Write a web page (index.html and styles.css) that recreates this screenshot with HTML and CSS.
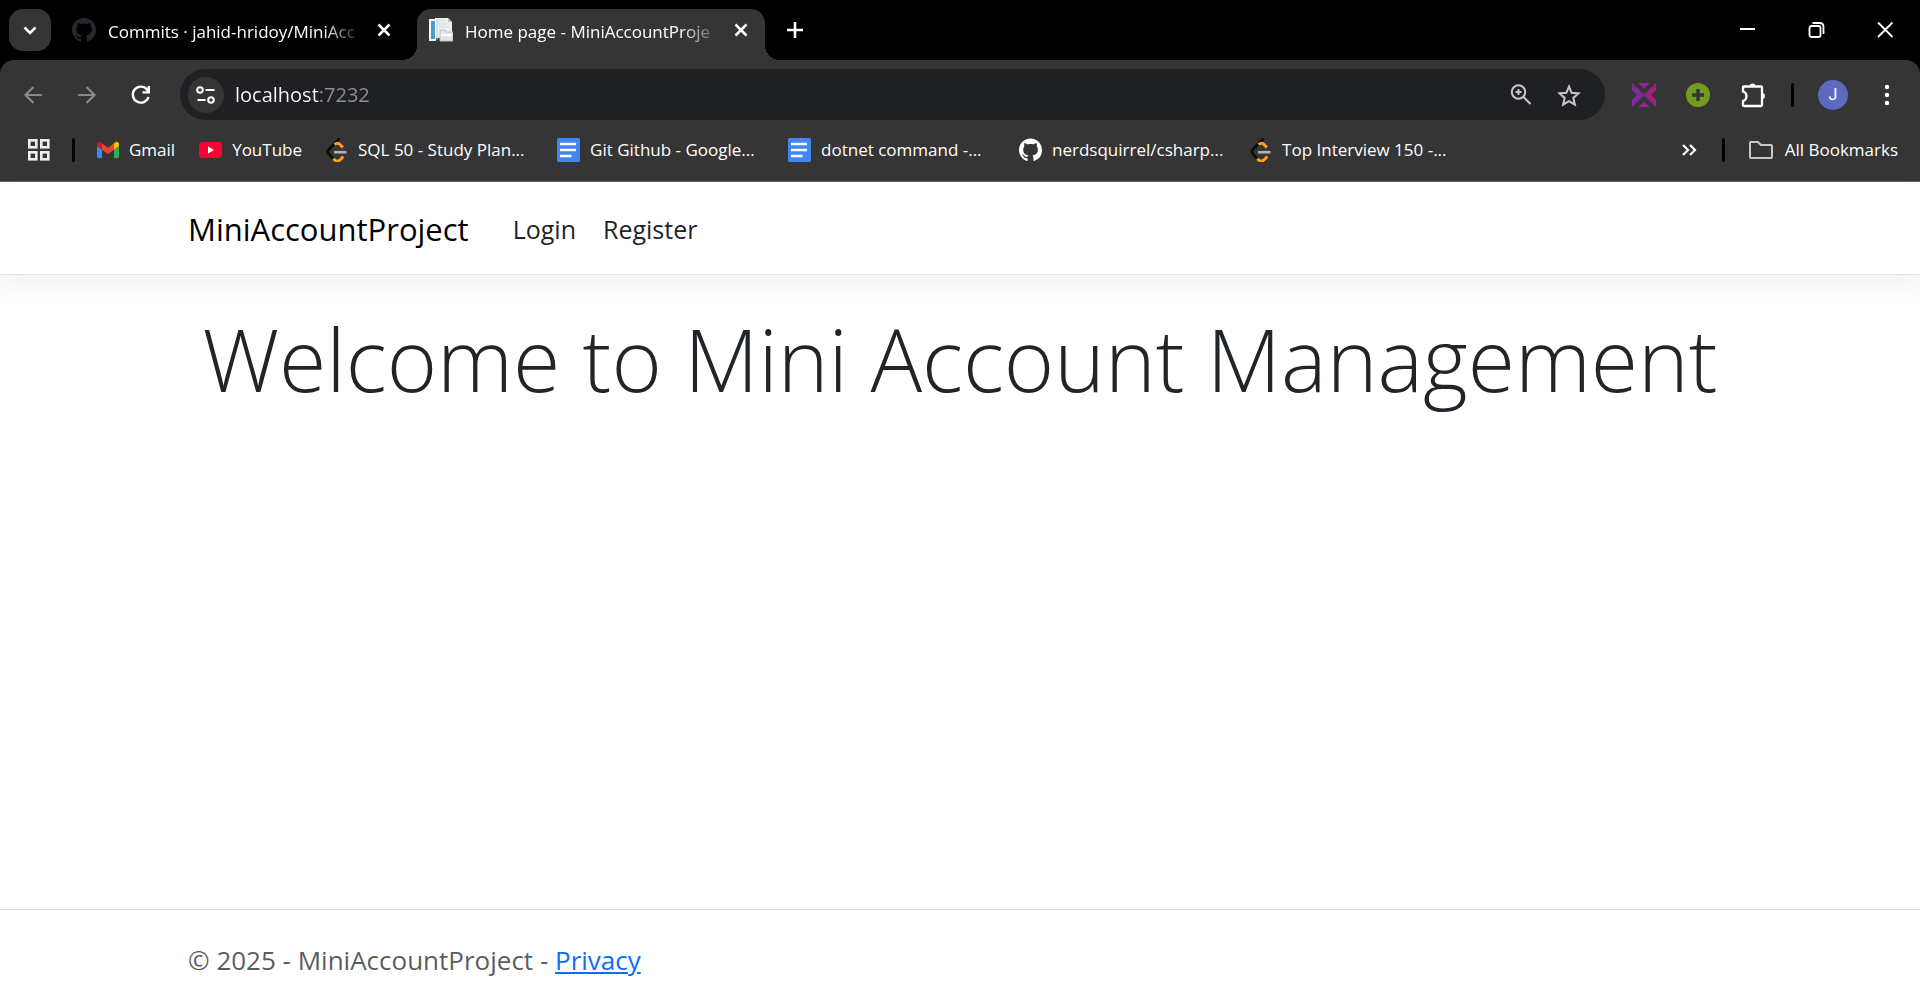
FILE: index.html
```html
<!DOCTYPE html>
<html lang="en">
<head>
<meta charset="utf-8">
<meta name="viewport" content="width=device-width, initial-scale=1">
<title>Home page - MiniAccountProject</title>
<link rel="stylesheet" href="styles.css">
</head>
<body>
<svg class="defs" aria-hidden="true">
  <symbol id="github" viewBox="0 0 16 16"><path d="M8 0C3.58 0 0 3.58 0 8c0 3.54 2.29 6.53 5.47 7.59.4.07.55-.17.55-.38 0-.19-.01-.82-.01-1.49-2.01.37-2.53-.49-2.69-.94-.09-.23-.48-.94-.82-1.13-.28-.15-.68-.52-.01-.53.63-.01 1.08.58 1.23.82.72 1.21 1.87.87 2.33.66.07-.52.28-.87.51-1.07-1.78-.2-3.64-.89-3.64-3.95 0-.87.31-1.59.82-2.15-.08-.2-.36-1.02.08-2.12 0 0 .67-.21 2.2.82.64-.18 1.32-.27 2-.27s1.36.09 2 .27c1.53-1.04 2.2-.82 2.2-.82.44 1.1.16 1.92.08 2.12.51.56.82 1.27.82 2.15 0 3.07-1.87 3.75-3.65 3.95.29.25.54.73.54 1.48 0 1.07-.01 1.93-.01 2.2 0 .21.15.46.55.38A8.01 8.01 0 0 0 16 8c0-4.42-3.58-8-8-8z" fill="currentColor"/></symbol>
  <symbol id="close" viewBox="0 0 24 24"><path d="M6.500 6.500 17.500 17.500M17.500 6.500 6.500 17.500" stroke="#fff" stroke-width="2.500"/></symbol>
  <symbol id="docs" viewBox="0 0 23 24"><rect width="23" height="24" rx="1.500" fill="#4285f4"/><path d="M3 6H19M3 12H19M3 18H14.500" stroke="#fff" stroke-width="2.500"/></symbol>
  <symbol id="leetcode" viewBox="0 0 22 24"><path d="M13.500 .5 2.700 11.500Q.8 13.500 2.700 15.600L7.500 21" fill="none" stroke="#0b0b0b" stroke-width="2.800"/><path d="M8.500 6.500Q11.500 4 14 6.500L16.800 9.500M7.300 20.800Q11 25 14.500 21.500L17.300 18.500" fill="none" stroke="#ffa116" stroke-width="2.900"/><path d="M8 14.200H20.500" stroke="#b3b3b3" stroke-width="2.600"/></symbol>
</svg>

<header class="browser">
  <div class="tabstrip">
    <button class="tab-search" aria-label="Search tabs"><svg width="24" height="24" viewBox="0 0 24 24"><path d="m6.500 9.500 5.500 5.500 5.500-5.500" fill="none" stroke="#fff" stroke-width="2.600"/></svg></button>
    <div class="tab">
      <svg class="tab-icon tab-github"><use href="#github"/></svg>
      <span class="tab-title">Commits · jahid-hridoy/MiniAcc</span>
      <button class="icon-button" aria-label="Close tab"><svg width="24" height="24"><use href="#close"/></svg></button>
    </div>
    <div class="tab tab-active">
      <svg class="tab-icon" viewBox="0 0 24 24"><path d="M6 0H19L23 4V20H6Z" fill="#eef1f4"/><path d="M0 1H7V23H0Z" fill="#f4f7f9"/><path d="M2 3H6V21H2Z" fill="#4a9cc9"/><path d="M9 3H17M9 6H20M9 9H20" stroke="#d5dbe1"/><path d="M19 0V4H23Z" fill="#b9c1c8"/><path d="M8 1V22" stroke="#c3ccd4"/><path d="M11 12H16L17 14H24V23H11Z" fill="#dfe5ea" stroke="#b5c0ca"/><path d="M12 17H23" stroke="#fff" stroke-width="2"/></svg>
      <span class="tab-title">Home page - MiniAccountProje</span>
      <button class="icon-button" aria-label="Close tab"><svg width="24" height="24"><use href="#close"/></svg></button>
    </div>
    <button class="icon-button new-tab" aria-label="New tab"><svg width="24" height="24" viewBox="0 0 24 24"><path d="M12 4V20M4 12H20" stroke="#fff" stroke-width="2.500"/></svg></button>
    <div class="window-controls">
      <button class="icon-button" aria-label="Minimize"><svg width="24" height="24" viewBox="0 0 24 24"><path d="M5 11H20" stroke="#fff" stroke-width="2"/></svg></button>
      <button class="icon-button" aria-label="Restore"><svg width="24" height="24" viewBox="0 0 24 24"><g fill="none" stroke="#fff" stroke-width="1.800"><rect x="5.500" y="8" width="11" height="11" rx="2"/><path d="M8.500 5H15.500Q19.500 5 19.500 9V16"/></g></svg></button>
      <button class="icon-button" aria-label="Close window"><svg width="24" height="24" viewBox="0 0 24 24"><path d="m5 4.500 14.500 14.500M19.500 4.500 5 19" stroke="#fff" stroke-width="1.800"/></svg></button>
    </div>
  </div>

  <div class="toolbar">
    <div class="nav-buttons">
      <button class="icon-button muted" aria-label="Back"><svg width="24" height="24" viewBox="0 0 24 24"><path d="M21 12H5M12.500 4 4.500 12l8 8" fill="none" stroke="currentColor" stroke-width="2.200"/></svg></button>
      <button class="icon-button muted" aria-label="Forward"><svg width="24" height="24" viewBox="0 0 24 24"><path d="M3 12H19M11.500 4l8 8-8 8" fill="none" stroke="currentColor" stroke-width="2.200"/></svg></button>
      <button class="icon-button" aria-label="Reload"><svg width="24" height="24" viewBox="0 0 24 24"><path d="M19.500 14A8 8 0 1 1 18 6.500L20 9" fill="none" stroke="#fff" stroke-width="2.400"/><path d="M21 3V10.500H13.500V8.200H18.600V3Z" fill="#fff"/></svg></button>
    </div>
    <div class="omnibox">
      <button class="site-info" aria-label="View site information"><svg width="24" height="24" viewBox="0 0 24 24"><g fill="none" stroke="#fff" stroke-width="2"><circle cx="6" cy="7" r="2.800"/><path d="M11.500 7H20.500M3.500 17H11.500"/><circle cx="17" cy="17" r="2.800"/></g></svg></button>
      <input class="address" type="text" aria-label="Address" value="localhost:7232">
      <button class="icon-button" aria-label="Zoom"><svg width="24" height="24" viewBox="0 0 24 24"><g fill="none" stroke="#c7c7c7" stroke-width="2"><circle cx="9.500" cy="9" r="6.700"/><path d="m14.500 14 7 7"/><path d="M9.500 6V12M6.500 9H12.500"/></g></svg></button>
      <button class="icon-button" aria-label="Bookmark this tab"><svg width="26" height="26" viewBox="0 0 26 26"><path d="m12 3.500 2.600 6.300 6.900.6-5.200 4.500 1.600 6.800-5.900-3.600-5.900 3.600 1.600-6.800L2.500 10.400l6.900-.6Z" fill="none" stroke="#c7c7c7" stroke-width="2"/></svg></button>
    </div>
    <div class="extensions">
      <button class="icon-button" aria-label="Extension"><svg width="24" height="24" viewBox="0 0 24 24"><path d="M0 0 11 12 0 24V17L5 12 0 7Z" fill="#72309b"/><path d="M24 0 13 12 24 24V17L19 12 24 7Z" fill="#b41b76"/><path d="M0 0V5L5 10 7 12 5 14 0 19V24L12 13.500 24 24V19L17 12 24 5V0L12 10.500Z" fill="#8b2793" opacity=".6"/><path d="M6 0H18L12 5.500ZM6 24H18L12 18.500Z" fill="#93278f"/></svg></button>
      <button class="icon-button" aria-label="Add"><svg width="24" height="24" viewBox="0 0 24 24"><circle cx="12" cy="12" r="12" fill="#739c1f"/><path d="M12 6V18M6 12H18" stroke="#353535" stroke-width="3.500"/></svg></button>
      <button class="icon-button" aria-label="Extensions"><svg width="26" height="26" viewBox="0 0 26 26"><path d="M4 3.500H21Q22 3.500 22 4.500V22Q22 23 21 23H4Q3 23 3 22V18Q6.500 17 6.500 13.200T3 8.500V4.500Q3 3.500 4 3.500" fill="none" stroke="#fff" stroke-width="2.300"/><path d="M9.500 3.500a3 3 0 0 1 6 0ZM22 10a3 3 0 0 1 0 6Z" fill="#fff"/></svg></button>
      <span class="divider"></span>
      <button class="avatar" aria-label="Profile">J</button>
      <button class="icon-button" aria-label="Menu"><svg width="24" height="24" viewBox="0 0 24 24"><g fill="#fff"><circle cx="12" cy="4" r="2.200"/><circle cx="12" cy="12" r="2.200"/><circle cx="12" cy="20" r="2.200"/></g></svg></button>
    </div>
  </div>

  <nav class="bookmarks" aria-label="Bookmarks">
    <button class="icon-button" aria-label="Apps"><svg width="24" height="24" viewBox="0 0 24 24"><g fill="none" stroke="#eee" stroke-width="2.600"><rect x="2.300" y="2.300" width="7" height="7"/><rect x="14.300" y="2.300" width="7" height="7"/><rect x="2.300" y="14.300" width="7" height="7"/><rect x="14.300" y="14.300" width="7" height="7"/></g></svg></button>
    <span class="divider"></span>
    <div class="bookmark-list">
      <a class="bookmark" href="#"><svg width="22" height="24" viewBox="52 38 88 74"><path fill="#4285f4" d="M58 108h14V74L52 59v43c0 3.320 2.690 6 6 6"/><path fill="#34a853" d="M120 108h14c3.320 0 6-2.690 6-6V59l-20 15"/><path fill="#fbbc04" d="M120 48v26l20-15v-8c0-7.420-8.470-11.650-14.400-7.200"/><path fill="#ea4335" d="M72 74V48l24 18 24-18v26L96 92"/><path fill="#c5221f" d="M52 51v8l20 15V48l-5.600-4.200c-5.940-4.450-14.400-.22-14.400 7.200"/></svg>Gmail</a>
      <a class="bookmark" href="#"><svg width="23" height="24" viewBox="0 0 23 24"><rect y="4" width="23" height="16" rx="4" fill="#ff0033"/><path d="M9 8.500V15.500L15 12Z" fill="#fff"/></svg>YouTube</a>
      <a class="bookmark bookmark-long" href="#"><svg width="22" height="24"><use href="#leetcode"/></svg>SQL 50 - Study Plan...</a>
      <a class="bookmark bookmark-long" href="#"><svg width="23" height="24"><use href="#docs"/></svg>Git Github - Google...</a>
      <a class="bookmark bookmark-long" href="#"><svg width="23" height="24"><use href="#docs"/></svg>dotnet command -...</a>
      <a class="bookmark bookmark-long" href="#"><svg width="23" height="24"><use href="#github"/></svg>nerdsquirrel/csharp...</a>
      <a class="bookmark bookmark-long" href="#"><svg width="22" height="24"><use href="#leetcode"/></svg>Top Interview 150 -...</a>
    </div>
    <div class="bookmark-end">
      <button class="icon-button" aria-label="More bookmarks"><svg width="24" height="24" viewBox="0 0 24 24"><path d="m6 7 5 5-5 5M13 7l5 5-5 5" fill="none" stroke="#fff" stroke-width="2.200"/></svg></button>
      <span class="divider"></span>
      <button class="bookmark all-bookmarks"><svg width="24" height="24" viewBox="0 0 24 24"><path d="M1 5Q1 4 2 4H9L12 7H22Q23 7 23 8V19Q23 20 22 20H2Q1 20 1 19Z" fill="none" stroke="#c7c7c7" stroke-width="2"/></svg>All Bookmarks</button>
    </div>
  </nav>
</header>

<div class="page">
  <nav class="navbar" aria-label="Main">
    <div class="container navbar-inner">
      <a class="brand" href="#">MiniAccountProject</a>
      <a class="nav-link" href="#">Login</a>
      <a class="nav-link" href="#">Register</a>
    </div>
  </nav>
  <main class="container">
    <h1 class="display">Welcome to Mini Account Management</h1>
  </main>
  <footer class="footer">
    <div class="container">© 2025 - MiniAccountProject - <a class="privacy" href="#">Privacy</a></div>
  </footer>
</div>
</body>
</html>
```
FILE: styles.css
```css
* { box-sizing: border-box; }

body {
  margin: 0;
  min-height: 100vh;
  display: flex;
  flex-direction: column;
  background: #fff;
  color: #212529;
  font-family: "Open Sans", "Noto Sans", sans-serif;
}

button { border: 0; padding: 0; background: none; color: inherit; font: inherit; }
a { color: inherit; text-decoration: none; }
svg { display: block; flex: none; }
.defs { position: absolute; width: 0; height: 0; }

/* Browser window */
.browser {
  background: #000;
  color: #fff;
  font-size: 17px;
  line-height: 24px;
}

.icon-button {
  display: grid;
  place-items: center;
  flex: none;
  width: 24px;
  height: 24px;
}

.muted { color: #8a8a8a; }

.divider {
  flex: none;
  width: 3px;
  height: 24px;
  border-radius: 2px;
  background: #000;
}

.tabstrip {
  display: flex;
  align-items: flex-end;
  height: 60px;
  padding-left: 9px;
}

.tab-search {
  display: grid;
  place-items: center;
  width: 42px;
  height: 42px;
  margin-bottom: 9px;
  border-radius: 14px;
  background: #353535;
}

.tab {
  position: relative;
  display: flex;
  align-items: center;
  gap: 12px;
  width: 348px;
  height: 51px;
  padding: 0 12px 9px;
  margin-left: 9px;
}

.tab-active {
  border-radius: 14px 14px 0 0;
  background: #353535;
}

.tab-active::before,
.tab-active::after {
  content: "";
  position: absolute;
  bottom: 0;
  width: 15px;
  height: 15px;
}
.tab-active::before { right: 100%; background: radial-gradient(circle at 0 0, transparent 15px, #353535 15px); }
.tab-active::after { left: 100%; background: radial-gradient(circle at 100% 0, transparent 15px, #353535 15px); }

.tab-icon { width: 24px; height: 24px; }
.tab-github { color: #24292f; }

.tab-title {
  flex: 0 0 252px;
  padding-top: 3px;
  white-space: nowrap;
  mask-image: linear-gradient(to right, #000 215px, transparent 256px);
}

.new-tab { margin: 0 0 18px 18px; }

.window-controls {
  display: flex;
  gap: 45px;
  margin: 0 23px 18px auto;
}

.toolbar {
  display: flex;
  align-items: center;
  height: 69px;
  padding: 0 21px;
  border-radius: 14px 14px 0 0;
  background: #353535;
}

.nav-buttons { display: flex; gap: 30px; }

.omnibox {
  display: flex;
  flex: 1;
  align-items: center;
  gap: 24px;
  height: 51px;
  margin: 0 27px;
  padding: 0 24px 0 8px;
  border-radius: 26px;
  background: #1f2024;
}

.site-info {
  display: grid;
  place-items: center;
  width: 36px;
  height: 36px;
  border-radius: 50%;
  background: #353535;
}

.address {
  flex: 1;
  min-width: 0;
  height: 36px;
  margin-left: -13px;
  padding: 0;
  border: 0;
  outline: 0;
  font: 20px/36px "Open Sans", "Noto Sans", sans-serif;
  color: #fff;
  background: linear-gradient(to right, #fff 84px, #8f9094 84px);
  background-clip: text;
  -webkit-text-fill-color: transparent;
}

.extensions { display: flex; align-items: center; gap: 30px; }
.extensions .divider { margin: 0 -6px 0 -3px; }

.avatar {
  width: 30px;
  height: 30px;
  margin-right: -3px;
  border-radius: 50%;
  background: #5c6bc0;
  font: 16px/30px Roboto, sans-serif;
}

.bookmarks {
  display: flex;
  align-items: center;
  height: 53px;
  padding: 0 22px 11px 27px;
  border-bottom: 1px solid #646464;
  background: #353535;
}

.bookmarks > .divider { margin: 0 22px 0 21px; }

.bookmark-list { display: flex; flex: 1; min-width: 0; }

.bookmark {
  display: flex;
  align-items: center;
  gap: 10px;
  padding-right: 24px;
  white-space: nowrap;
}
.bookmark-long { width: 231px; padding-right: 0; }
.bookmark-end { display: flex; align-items: center; }
.bookmark-end .divider { margin: 0 24px 0 21px; }
.all-bookmarks { padding: 0; gap: 12px; }

/* Web page */
.page { display: flex; flex: 1; flex-direction: column; }

.container { width: 100%; padding: 0 188px; }

.navbar {
  padding: 21px 0 19px;
  border-bottom: 1px solid #dee2e6;
  box-shadow: 0 12px 24px rgb(0 0 0 / 5%);
}

.navbar-inner { display: flex; align-items: center; gap: 27px; line-height: 52px; }
.brand { margin-right: 17px; color: #000; font-size: 31px; }
.nav-link { font-size: 25px; }

.display {
  margin: 32px 0 0;
  font-size: 86px;
  font-weight: 300;
  line-height: 104px;
  text-align: center;
}

.footer {
  margin-top: auto;
  padding-top: 2px;
  border-top: 1px solid #dee2e6;
  color: rgb(33 37 41 / 75%);
  font-size: 26px;
  line-height: 96px;
}

.privacy { color: #0d6efd; text-decoration: underline; }
```
